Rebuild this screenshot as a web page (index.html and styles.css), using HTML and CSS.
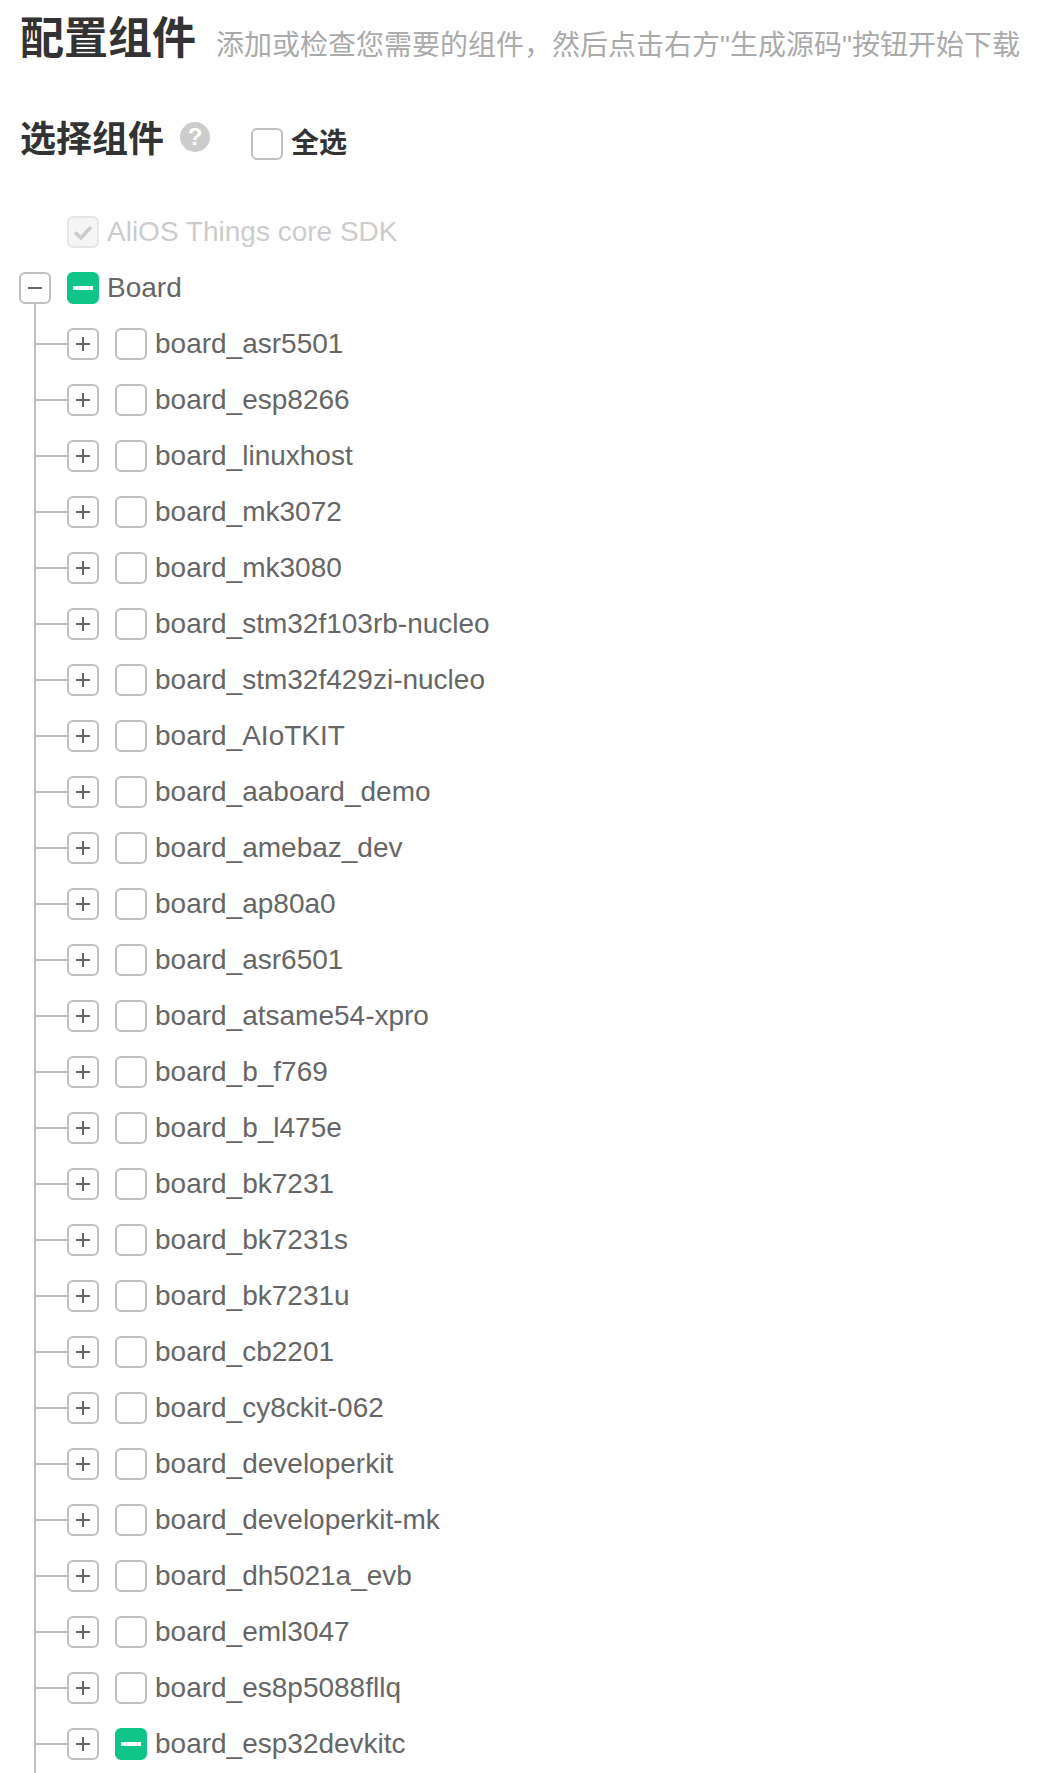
FILE: index.html
```html
<!DOCTYPE html>
<html lang="zh-CN">
<head>
    <meta charset="UTF-8">
    <meta name="viewport" content="width=device-width, initial-scale=1.0">
    <title>配置组件</title>
    <link rel="stylesheet" href="styles.css">
</head>
<body>
    <div class="page-head">
        <h1>配置组件</h1>
        <span class="page-desc">添加或检查您需要的组件，然后点击右方"生成源码"按钮开始下载</span>
    </div>
    <div class="select-head">
        <h2>选择组件</h2>
        <span class="help">?</span>
        <label class="select-all"><span class="check"></span>全选</label>
    </div>
    <div class="tree">
        <div class="row root-row disabled">
            <span class="toggle-space"></span>
            <span class="check checked">
                <svg viewBox="0 0 20 20" width="20" height="20"><path d="M2 10.5l6 5.5 10-11" fill="none" stroke="#ccc" stroke-width="3.6"/></svg>
            </span>
            <span class="name">AliOS Things core SDK</span>
        </div>
        <div class="row root-row">
            <span class="toggle minus"></span>
            <span class="check half"></span>
            <span class="name">Board</span>
        </div>
        <ul class="children">
            <li class="row"><span class="toggle plus"></span><span class="check"></span><span class="name">board_asr5501</span></li>
            <li class="row"><span class="toggle plus"></span><span class="check"></span><span class="name">board_esp8266</span></li>
            <li class="row"><span class="toggle plus"></span><span class="check"></span><span class="name">board_linuxhost</span></li>
            <li class="row"><span class="toggle plus"></span><span class="check"></span><span class="name">board_mk3072</span></li>
            <li class="row"><span class="toggle plus"></span><span class="check"></span><span class="name">board_mk3080</span></li>
            <li class="row"><span class="toggle plus"></span><span class="check"></span><span class="name">board_stm32f103rb-nucleo</span></li>
            <li class="row"><span class="toggle plus"></span><span class="check"></span><span class="name">board_stm32f429zi-nucleo</span></li>
            <li class="row"><span class="toggle plus"></span><span class="check"></span><span class="name">board_AIoTKIT</span></li>
            <li class="row"><span class="toggle plus"></span><span class="check"></span><span class="name">board_aaboard_demo</span></li>
            <li class="row"><span class="toggle plus"></span><span class="check"></span><span class="name">board_amebaz_dev</span></li>
            <li class="row"><span class="toggle plus"></span><span class="check"></span><span class="name">board_ap80a0</span></li>
            <li class="row"><span class="toggle plus"></span><span class="check"></span><span class="name">board_asr6501</span></li>
            <li class="row"><span class="toggle plus"></span><span class="check"></span><span class="name">board_atsame54-xpro</span></li>
            <li class="row"><span class="toggle plus"></span><span class="check"></span><span class="name">board_b_f769</span></li>
            <li class="row"><span class="toggle plus"></span><span class="check"></span><span class="name">board_b_l475e</span></li>
            <li class="row"><span class="toggle plus"></span><span class="check"></span><span class="name">board_bk7231</span></li>
            <li class="row"><span class="toggle plus"></span><span class="check"></span><span class="name">board_bk7231s</span></li>
            <li class="row"><span class="toggle plus"></span><span class="check"></span><span class="name">board_bk7231u</span></li>
            <li class="row"><span class="toggle plus"></span><span class="check"></span><span class="name">board_cb2201</span></li>
            <li class="row"><span class="toggle plus"></span><span class="check"></span><span class="name">board_cy8ckit-062</span></li>
            <li class="row"><span class="toggle plus"></span><span class="check"></span><span class="name">board_developerkit</span></li>
            <li class="row"><span class="toggle plus"></span><span class="check"></span><span class="name">board_developerkit-mk</span></li>
            <li class="row"><span class="toggle plus"></span><span class="check"></span><span class="name">board_dh5021a_evb</span></li>
            <li class="row"><span class="toggle plus"></span><span class="check"></span><span class="name">board_eml3047</span></li>
            <li class="row"><span class="toggle plus"></span><span class="check"></span><span class="name">board_es8p5088fllq</span></li>
            <li class="row"><span class="toggle plus"></span><span class="check half"></span><span class="name">board_esp32devkitc</span></li>
        </ul>
    </div>
</body>
</html>
```

FILE: styles.css
```css
html, body {
    height: 100%;
    overflow: hidden;
}
body {
    margin: 0;
    padding: 0 19px;
    background-color: #fff;
    font-family: "Liberation Sans", "Noto Sans CJK SC", sans-serif;
    color: #333;
}

.page-head {
    display: flex;
    align-items: flex-start;
    gap: 20px;
    height: 77px;
    padding: 9px 0 0 1px;
    white-space: nowrap;
}
h1 {
    margin: 0;
    font-size: 44px;
    line-height: 60px;
    font-weight: bold;
}
.page-desc {
    margin-top: 17px;
    font-size: 28px;
    line-height: 40px;
    color: #aaa;
}

.select-head {
    display: flex;
    align-items: center;
    height: 60px;
    margin-top: 24px;
    padding-left: 1px;
}
h2 {
    margin: 0;
    font-size: 36px;
    line-height: 50px;
    font-weight: bold;
}
.help {
    width: 30px;
    height: 30px;
    margin: -6px 0 0 16px;
    border-radius: 50%;
    background-color: #ccc;
    color: #fff;
    font-size: 24px;
    font-weight: bold;
    line-height: 30px;
    text-align: center;
}
.select-all {
    display: flex;
    align-items: center;
    gap: 8px;
    margin: 2px 0 0 41px;
    font-size: 28px;
    font-weight: bold;
}
.select-all .check {
    margin-top: 6px;
}

.tree {
    margin-top: 34px;
}
.row {
    display: flex;
    align-items: center;
    height: 56px;
    position: relative;
}
.name {
    margin-left: 8px;
    font-size: 28px;
    color: #666;
    white-space: nowrap;
}
.disabled .name {
    color: #ccc;
}

.check {
    flex: none;
    box-sizing: border-box;
    display: flex;
    align-items: center;
    justify-content: center;
    width: 32px;
    height: 32px;
    border: 2px solid #c0c0c0;
    border-radius: 6px;
    background-color: #fff;
}
.check.checked {
    border-color: #e6e6e6;
    background-color: #f5f5f5;
}
.check.half {
    border-color: #10c588;
    background-color: #10c588;
}
.check.half::after {
    content: "";
    width: 20px;
    height: 4px;
    background-color: #fff;
}

.toggle, .toggle-space {
    flex: none;
    box-sizing: border-box;
    width: 32px;
    height: 32px;
    margin-right: 16px;
}
.toggle {
    position: relative;
    border: 2px solid #c0c0c0;
    border-radius: 6px;
    background-color: #fff;
}
.toggle::before, .plus::after {
    content: "";
    position: absolute;
    left: 7px;
    top: 13px;
    width: 14px;
    height: 2px;
    background-color: #666;
}
.plus::after {
    left: 13px;
    top: 7px;
    width: 2px;
    height: 14px;
}

/* vertical line starts right under the Board toggle */
.children {
    list-style: none;
    margin: -12px 0 0 15px;
    padding: 12px 0 20px 31px;
    border-left: 2px solid #c0c0c0;
}
.children .row::before {
    content: "";
    position: absolute;
    left: -31px;
    top: 27px;
    width: 31px;
    height: 2px;
    background-color: #c0c0c0;
}
```
